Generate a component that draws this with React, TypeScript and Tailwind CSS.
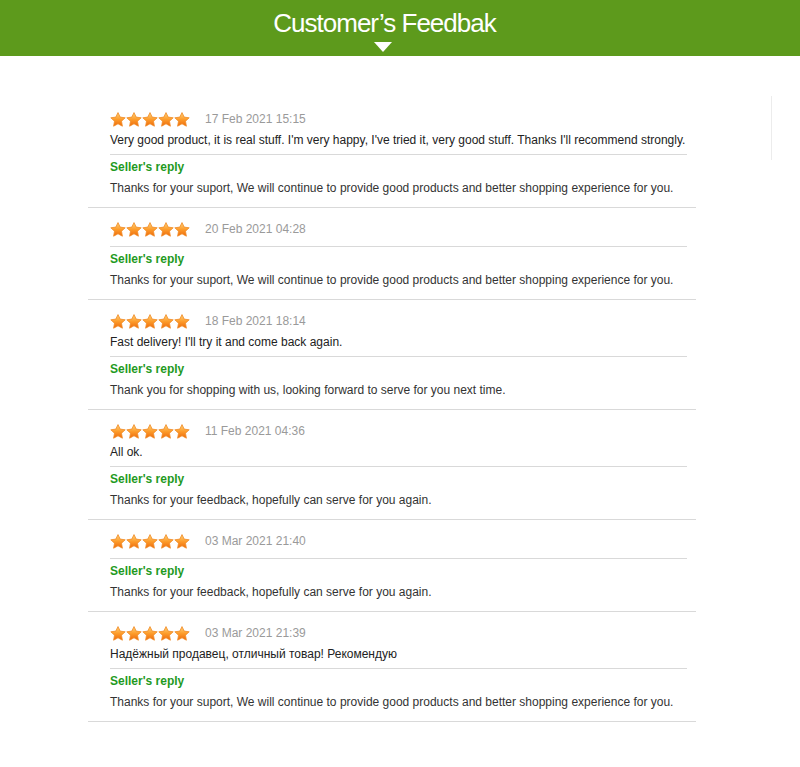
import React from "react";

type Review = {
  date: string;
  comment?: string;
  reply: string;
};

const SUPPORT_REPLY =
  "Thanks for your suport, We will continue to provide good products and better shopping experience for you.";
const FEEDBACK_REPLY = "Thanks for your feedback, hopefully can serve for you again.";

const reviews: Review[] = [
  {
    date: "17 Feb 2021 15:15",
    comment:
      "Very good product, it is real stuff. I'm very happy, I've tried it, very good stuff. Thanks I'll recommend strongly.",
    reply: SUPPORT_REPLY,
  },
  { date: "20 Feb 2021 04:28", reply: SUPPORT_REPLY },
  {
    date: "18 Feb 2021 18:14",
    comment: "Fast delivery! I'll try it and come back again.",
    reply: "Thank you for shopping with us, looking forward to serve for you next time.",
  },
  { date: "11 Feb 2021 04:36", comment: "All ok.", reply: FEEDBACK_REPLY },
  { date: "03 Mar 2021 21:40", reply: FEEDBACK_REPLY },
  {
    date: "03 Mar 2021 21:39",
    comment: "Надёжный продавец, отличный товар! Рекомендую",
    reply: SUPPORT_REPLY,
  },
];

// plump five-point star, 16px cell
const STAR =
  "M8 0.6 L10.2 5.1 L15.2 5.8 L11.5 9.2 L12.4 14.2 L8 11.8 L3.6 14.2 L4.5 9.2 L0.8 5.8 L5.8 5.1 Z";

function Stars() {
  return (
    <svg width="80" height="15" viewBox="0 0 80 15" className="block">
      <defs>
        <linearGradient id="starFill" x1="0" y1="0" x2="0" y2="1">
          <stop offset="0" stopColor="#ffd27a" />
          <stop offset="0.5" stopColor="#fd9d2c" />
          <stop offset="1" stopColor="#ee6a0a" />
        </linearGradient>
      </defs>
      {[0, 1, 2, 3, 4].map((i) => (
        <path
          key={i}
          d={STAR}
          transform={`translate(${i * 16} 0)`}
          fill="url(#starFill)"
          stroke="#f08a26"
          strokeWidth="0.8"
          strokeLinejoin="round"
        />
      ))}
    </svg>
  );
}

function ReviewItem({ review }: { review: Review }) {
  return (
    <div className="border-b border-[#d9d9d9] pl-[22px] pr-[9px] pt-[11px] pb-[8px]">
      <div className="flex h-[20px] items-center">
        <Stars />
        <span className="ml-[15px] text-[12px] text-[#9a9a9a]">{review.date}</span>
      </div>
      {review.comment ? (
        <div className="pb-[3px] text-[12px] leading-[22px] text-[#222]">{review.comment}</div>
      ) : (
        <div className="h-[7px]" />
      )}
      <div className="border-t border-[#d9d9d9] pt-[2px]">
        <div className="text-[12px] font-bold leading-[20px] text-[#1f9a1f]">Seller's reply</div>
        <div className="text-[12px] leading-[22px] text-[#333]">{review.reply}</div>
      </div>
    </div>
  );
}

export default function App(): React.ReactElement {
  return (
    <div className="min-h-[767px] bg-white font-['Liberation_Sans',Arial,sans-serif]">
      <header className="flex h-[56px] flex-col items-center bg-[#5d9a1c] pr-[31px]">
        <h1 className="pt-[7px] text-[26px] leading-[32px] tracking-[-1px] text-white">
          Customer’s Feedbak
        </h1>
        <div className="mt-[3px] ml-[-4px] h-0 w-0 border-x-[9px] border-t-[10px] border-x-transparent border-t-white" />
      </header>

      <div className="flex items-start pt-[42px]">
        <div className="ml-[88px] w-[608px]">
          {reviews.map((review, i) => (
            <ReviewItem key={i} review={review} />
          ))}
        </div>
        <div className="ml-auto mr-[28px] mt-[-2px] h-[64px] w-px bg-[#ececec]" />
      </div>
    </div>
  );
}
